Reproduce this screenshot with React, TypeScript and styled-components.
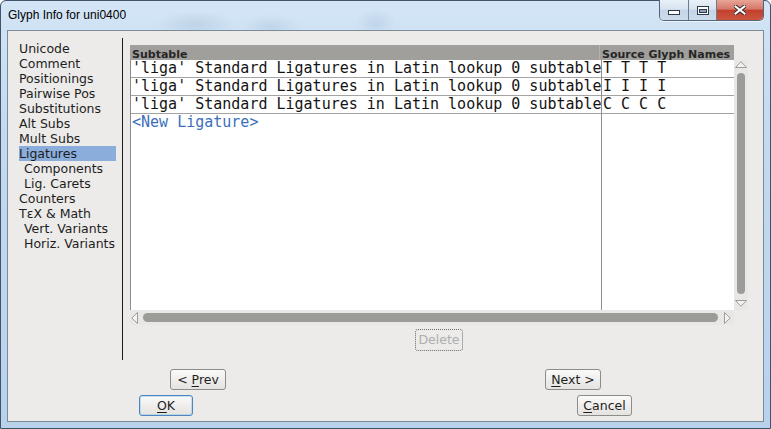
import React from 'react';
import styled, { createGlobalStyle } from 'styled-components';

const Global = createGlobalStyle`
  html, body { margin: 0; padding: 0; overflow: hidden; background: #ffffff; }
  #root { width: 771px; height: 429px; }
`;

const Win = styled.div`
  width: 771px;
  height: 429px;
  box-sizing: border-box;
  border: 1px solid #41536a;
  border-radius: 6px 6px 0 0;
  background:
    radial-gradient(ellipse 40px 14px at 195px 24px, rgba(110,140,170,0.18), transparent),
    radial-gradient(ellipse 30px 12px at 270px 26px, rgba(110,140,170,0.16), transparent),
    radial-gradient(ellipse 20px 14px at 375px 22px, rgba(110,140,170,0.16), transparent),
    linear-gradient(180deg, #d3e5f6 0%, #c3daf0 30%, #b9d2ec 100%);
  display: flex;
  flex-direction: column;
  font-family: "DejaVu Sans", sans-serif;
`;

const TitleBar = styled.div`
  height: 29px;
  flex: none;
  display: flex;
  align-items: flex-start;
  justify-content: space-between;
`;

const Title = styled.div`
  font-family: "Liberation Sans", Arial, sans-serif;
  font-size: 12px;
  color: #000;
  padding: 7px 0 0 7px;
  line-height: 14px;
`;

const Captions = styled.div`
  display: flex;
  margin: -1px 6px 0 0;
  height: 20px;
  border: 1px solid #54657a;
  border-top: none;
  border-radius: 0 0 5px 5px;
  overflow: hidden;
  box-shadow: 0 1px 0 rgba(255,255,255,0.6);
`;

const CapBtn = styled.div<{ $w: number; $close?: boolean; $first?: boolean }>`
  width: ${p => p.$w}px;
  height: 20px;
  display: flex;
  align-items: center;
  justify-content: center;
  border-left: ${p => (p.$first ? 'none' : '1px solid #6d7d90')};
  background: ${p =>
    p.$close
      ? 'linear-gradient(180deg, #e8a596 0%, #d5786a 45%, #c2402e 52%, #cc5640 100%)'
      : 'linear-gradient(180deg, #e9f0f8 0%, #d8e3ef 45%, #c5d4e6 52%, #cddced 100%)'};
`;

const Client = styled.div`
  margin: 0 6px 6px 6px;
  flex: 1;
  border: 1px solid #7d8b99;
  background: #ecebe9;
  display: flex;
  flex-direction: column;
  padding-top: 7px;
`;

const Main = styled.div`
  height: 322px;
  display: flex;
  flex: none;
`;

const Nav = styled.div`
  margin: 3px 0 0 11px;
  width: 97px;
  display: flex;
  flex-direction: column;
`;

const NavItem = styled.div<{ $active?: boolean; $sub?: boolean }>`
  height: 15px;
  line-height: 15px;
  font-size: 12.5px;
  color: #1d1d1d;
  white-space: nowrap;
  padding-left: ${p => (p.$sub ? 5 : 0)}px;
  background: ${p => (p.$active ? '#8aaddb' : 'transparent')};
`;

const Divider = styled.div`
  margin-left: 6px;
  width: 1px;
  background: #1e1e1e;
`;

const Panel = styled.div`
  margin-left: 7px;
  width: 618px;
  padding-top: 7px;
  display: flex;
  flex-direction: column;
  align-items: center;
`;

const Table = styled.div`
  display: grid;
  grid-template-columns: 604px 14px;
  grid-template-rows: 15px 250px 15px;
  width: 618px;
`;

const Header = styled.div`
  display: flex;
  background: #a09f9b;
  overflow: hidden;
`;

const HeadCell = styled.div<{ $w?: number }>`
  ${p => (p.$w ? `width: ${p.$w}px; flex: none;` : 'flex: 1;')}
  box-sizing: border-box;
  height: 15px;
  padding: 4px 0 0 2px;
  font-size: 11px;
  font-weight: bold;
  line-height: 11px;
  color: #262626;
  white-space: nowrap;
  overflow: hidden;
  border-right: ${p => (p.$w ? '1px solid #b3b2ae' : 'none')};
`;

const Blank = styled.div`
  background: #ecebe9;
`;

const Body = styled.div`
  background: #ffffff;
  border-left: 1px solid #8c8c8c;
  display: flex;
  overflow: hidden;
`;

const Column = styled.div<{ $w?: number }>`
  ${p => (p.$w ? `width: ${p.$w}px; flex: none; border-right: 1px solid #8f8f8f;` : 'flex: 1;')}
  display: flex;
  flex-direction: column;
  overflow: hidden;
`;

const Cell = styled.div<{ $new?: boolean; $line?: boolean }>`
  height: 17px;
  line-height: 17px;
  padding-left: 1px;
  font-family: "DejaVu Sans Mono", monospace;
  font-size: 15px;
  color: ${p => (p.$new ? '#3b6fbd' : '#141414')};
  white-space: nowrap;
  overflow: hidden;
  border-bottom: ${p => (p.$line ? '1px solid #a3a3a3' : '1px solid transparent')};
`;

const VScroll = styled.div`
  background: #e8e7e5;
  display: flex;
  flex-direction: column;
  align-items: center;
  padding: 1px 0 3px;
  box-sizing: border-box;
`;

const VThumb = styled.div`
  width: 8px;
  height: 221px;
  margin: 5px 0 6px;
  border-radius: 4px;
  background: #9b9b97;
`;

const HScroll = styled.div`
  background: #e8e7e5;
  display: flex;
  align-items: center;
  padding: 0 3px 0 1px;
`;

const HThumb = styled.div`
  flex: 1;
  height: 9px;
  margin: 0 6px 0 5px;
  border-radius: 4.5px;
  background: #9b9b97;
`;

const DeleteBtn = styled.div`
  margin-top: 4px;
  width: 48px;
  height: 22px;
  box-sizing: border-box;
  border: 1px dotted #6a6a6a;
  border-radius: 3px;
  font-size: 12.5px;
  line-height: 20px;
  text-align: center;
  color: #aeaeae;
`;

const BtnRow = styled.div<{ $top: number; $pad: number }>`
  display: flex;
  justify-content: space-between;
  margin-top: ${p => p.$top}px;
  padding: 0 ${p => p.$pad}px;
`;

const Btn = styled.div<{ $w: number; $def?: boolean }>`
  width: ${p => p.$w}px;
  height: 21px;
  box-sizing: border-box;
  border: 1px solid ${p => (p.$def ? '#4a86c0' : '#8c8c8a')};
  border-radius: 3px;
  background: linear-gradient(180deg, #fafaf9 0%, #efeeec 50%, #e4e3e0 100%);
  font-size: 12.5px;
  line-height: 19px;
  text-align: center;
  color: #1e1e1e;
  white-space: nowrap;
  box-shadow: ${p => (p.$def ? 'inset 0 0 0 1px rgba(150,195,235,0.5)' : 'none')};
  u { text-decoration: underline; text-underline-offset: 2px; }
`;

const ArrowUp = () => (
  <svg width="12" height="7" viewBox="0 0 12 7">
    <polygon points="0.5,6.5 6,0.8 11.5,6.5" fill="#f3f3f1" stroke="#9c9c9a" strokeWidth="1" />
  </svg>
);
const ArrowDown = () => (
  <svg width="12" height="7" viewBox="0 0 12 7">
    <polygon points="0.5,0.5 6,6.2 11.5,0.5" fill="#f3f3f1" stroke="#9c9c9a" strokeWidth="1" />
  </svg>
);
const ArrowLeft = () => (
  <svg width="7" height="12" viewBox="0 0 7 12" style={{ flex: 'none' }}>
    <polygon points="6.5,0.5 0.8,6 6.5,11.5" fill="#f3f3f1" stroke="#9c9c9a" strokeWidth="1" />
  </svg>
);
const ArrowRight = () => (
  <svg width="7" height="12" viewBox="0 0 7 12" style={{ flex: 'none' }}>
    <polygon points="0.5,0.5 6.2,6 0.5,11.5" fill="#f3f3f1" stroke="#9c9c9a" strokeWidth="1" />
  </svg>
);

const MinIcon = () => (
  <svg width="12" height="6" viewBox="0 0 12 6" style={{ marginTop: 6 }}>
    <rect x="0.5" y="0.5" width="11" height="4" fill="#ffffff" stroke="#2f3a48" strokeWidth="1" />
  </svg>
);
const MaxIcon = () => (
  <svg width="12" height="9" viewBox="0 0 12 9">
    <rect x="0.5" y="0.5" width="11" height="8" fill="#ffffff" stroke="#2f3a48" strokeWidth="1" />
    <rect x="2.5" y="3.5" width="7" height="3" fill="#8da2ba" stroke="#2f3a48" strokeWidth="1" />
  </svg>
);
const CloseIcon = () => (
  <svg width="12" height="10" viewBox="0 0 12 10">
    <path d="M1.5,1.5 L10.5,8.5 M10.5,1.5 L1.5,8.5" stroke="#3a2a2a" strokeWidth="4" strokeLinecap="square" />
    <path d="M1.5,1.5 L10.5,8.5 M10.5,1.5 L1.5,8.5" stroke="#ffffff" strokeWidth="2" strokeLinecap="square" />
  </svg>
);

const navItems: { label: string; active?: boolean; sub?: boolean }[] = [
  { label: 'Unicode' },
  { label: 'Comment' },
  { label: 'Positionings' },
  { label: 'Pairwise Pos' },
  { label: 'Substitutions' },
  { label: 'Alt Subs' },
  { label: 'Mult Subs' },
  { label: 'Ligatures', active: true },
  { label: 'Components', sub: true },
  { label: 'Lig. Carets', sub: true },
  { label: 'Counters' },
  { label: 'ΤεΧ & Math' },
  { label: 'Vert. Variants', sub: true },
  { label: 'Horiz. Variants', sub: true },
];

const rows = [
  { sub: "'liga' Standard Ligatures in Latin lookup 0 subtable", names: 'T T T T' },
  { sub: "'liga' Standard Ligatures in Latin lookup 0 subtable", names: 'I I I I' },
  { sub: "'liga' Standard Ligatures in Latin lookup 0 subtable", names: 'C C C C' },
];

export default function App() {
  return (
    <>
      <Global />
      <Win>
        <TitleBar>
          <Title>Glyph Info for uni0400</Title>
          <Captions>
            <CapBtn $w={28} $first>
              <MinIcon />
            </CapBtn>
            <CapBtn $w={27}>
              <MaxIcon />
            </CapBtn>
            <CapBtn $w={46} $close>
              <CloseIcon />
            </CapBtn>
          </Captions>
        </TitleBar>
        <Client>
          <Main>
            <Nav>
              {navItems.map(n => (
                <NavItem key={n.label} $active={n.active} $sub={n.sub}>
                  {n.label}
                </NavItem>
              ))}
            </Nav>
            <Divider />
            <Panel>
              <Table>
                <Header>
                  <HeadCell $w={470}>Subtable</HeadCell>
                  <HeadCell>Source Glyph Names</HeadCell>
                </Header>
                <Blank />
                <Body>
                  <Column $w={470}>
                    {rows.map((r, i) => (
                      <Cell key={i} $line>
                        {r.sub}
                      </Cell>
                    ))}
                    <Cell $new>{'<New Ligature>'}</Cell>
                  </Column>
                  <Column>
                    {rows.map((r, i) => (
                      <Cell key={i} $line>
                        {r.names}
                      </Cell>
                    ))}
                  </Column>
                </Body>
                <VScroll>
                  <ArrowUp />
                  <VThumb />
                  <ArrowDown />
                </VScroll>
                <HScroll>
                  <ArrowLeft />
                  <HThumb />
                  <ArrowRight />
                </HScroll>
                <Blank />
              </Table>
              <DeleteBtn>Delete</DeleteBtn>
            </Panel>
          </Main>
          <BtnRow $top={9} $pad={162}>
            <Btn $w={56}>
              &lt; <u>P</u>rev
            </Btn>
            <Btn $w={56}>
              <u>N</u>ext &gt;
            </Btn>
          </BtnRow>
          <BtnRow $top={5} $pad={131}>
            <Btn $w={54} $def>
              <u>O</u>K
            </Btn>
            <Btn $w={55}>
              <u>C</u>ancel
            </Btn>
          </BtnRow>
        </Client>
      </Win>
    </>
  );
}
